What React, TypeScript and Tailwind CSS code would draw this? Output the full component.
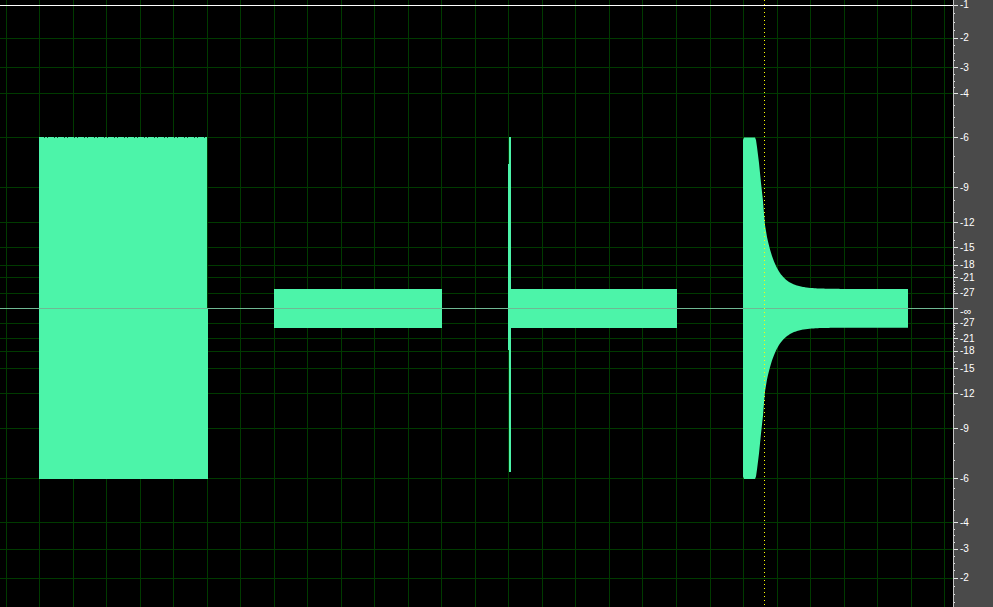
import React from 'react';

// amplitude display: linear amplitude, labelled in dB
const CX = 308.3;
const H = 340;
const W = 953;
const HT = 607;

const WAVE = '#4cf4a9';
const GRID = '#003a00';

const amp = (db: number) => Math.pow(10, db / 20);
const yUp = (db: number) => CX - H * amp(db);
const yDn = (db: number) => CX + H * amp(db);

const LABELS = [-1, -2, -3, -4, -6, -9, -12, -15, -18, -21, -27];

const minorTicks: number[] = [];
for (let d = -1.25; d > -4; d -= 0.25) minorTicks.push(d);
for (let d = -4.5; d > -6; d -= 0.5) minorTicks.push(d);
for (let d = -7; d > -28; d -= 1) if (!LABELS.includes(d)) minorTicks.push(d);

const px = (v: number) => Math.floor(v) + 0.5;

// decaying burst: measured edge, then exponential tail to the sustain level
function decayEnvelope() {
  const sustain = 0.057;
  const pts: [number, number][] = [
    [743, 140],
    [744, 137.5],
    [755, 137.5],
    [756, 140],
    [757, 147],
    [758, 155],
    [759, 163],
    [760, 173],
    [761, 183],
    [762, 192],
    [763, 201],
    [764, 214],
    [765, 225],
    [766, 231],
    [767, 237],
  ];
  const a0 = (CX - 237) / H;
  for (let x = 768; x <= 908; x++) {
    const a = sustain + (a0 - sustain) * Math.exp(-(x - 767) / 11);
    pts.push([x, CX - H * a]);
  }
  const top = pts.map(([x, y]) => `${x},${y.toFixed(1)}`);
  const bottom = [...pts].reverse().map(([x, y]) => `${x},${(2 * CX - y).toFixed(1)}`);
  return `M${top.join(' L')} L${bottom.join(' L')} Z`;
}

function Waveform() {
  const vLines = Array.from({ length: 29 }, (_, k) => 6.3 + 33.51 * k);
  const hLines: number[] = [];
  LABELS.forEach((db) => {
    if (db !== -1) hLines.push(yUp(db));
    const b = yDn(db);
    if (b < HT) hLines.push(b);
  });
  const sustTop = 289;
  const sustBot = 327.7;

  return (
    <svg width={W} height={HT} className="block" shapeRendering="crispEdges">
      <rect width={W} height={HT} fill="#000" />
      {vLines.map((x) => (
        <line key={`v${x}`} x1={px(x)} x2={px(x)} y1={0} y2={HT} stroke={GRID} strokeWidth={1} />
      ))}
      {hLines.map((y) => (
        <line key={`h${y}`} x1={0} x2={W} y1={px(y)} y2={px(y)} stroke={GRID} strokeWidth={1} />
      ))}
      <line x1={0} x2={W} y1={5.5} y2={5.5} stroke="#ffffff" strokeWidth={1} />

      {/* steady tone, -6 dB */}
      <rect x={39} y={137} width={168} height={342} fill={WAVE} />
      <rect x={207} y={308} width={1} height={171} fill={WAVE} />
      <line x1={44} x2={206} y1={137.5} y2={137.5} stroke="#000" strokeOpacity={0.7} strokeDasharray="1 2 1 6" />

      {/* quiet tone */}
      <rect x={274} y={sustTop} width={168} height={sustBot - sustTop} fill={WAVE} />

      {/* click then quiet tone */}
      <rect x={509} y={137} width={1.5} height={335} fill={WAVE} />
      <rect x={508} y={164} width={3} height={186} fill={WAVE} />
      <rect x={511} y={sustTop} width={166} height={sustBot - sustTop} fill={WAVE} />

      {/* decaying burst */}
      <path d={decayEnvelope()} fill={WAVE} shapeRendering="auto" />

      <line x1={0} x2={W} y1={308.5} y2={308.5} stroke="#6fb893" strokeWidth={1} />

      <line
        x1={764.5}
        x2={764.5}
        y1={0}
        y2={HT}
        stroke="#ffff00"
        strokeWidth={1}
        strokeDasharray="1 3"
      />
    </svg>
  );
}

function Scale() {
  const marks: { y: number; text: string }[] = [];
  LABELS.forEach((db) => {
    marks.push({ y: yUp(db), text: String(db) });
    const b = yDn(db);
    if (b < HT) marks.push({ y: b, text: String(db) });
  });
  const minors: number[] = [];
  minorTicks.forEach((db) => {
    minors.push(yUp(db));
    const b = yDn(db);
    if (b < HT) minors.push(b);
  });

  return (
    <div className="relative h-[607px] w-[40px] border-l border-[#c4c4c4] bg-[#4a4a4a]">
      <svg width={39} height={HT} className="absolute left-0 top-0" shapeRendering="crispEdges">
        {marks.map((m) => (
          <line key={`M${m.y}`} x1={0} x2={4} y1={px(m.y)} y2={px(m.y)} stroke="#e6e6e6" />
        ))}
        {minors.map((y) => (
          <rect key={`m${y}`} x={0} y={Math.floor(y)} width={1} height={1} fill="#e6e6e6" />
        ))}
        <line x1={0} x2={4} y1={308.5} y2={308.5} stroke="#e6e6e6" />
      </svg>
      {marks.map((m) => (
        <span
          key={`t${m.y}`}
          className="absolute left-[6px] text-[10px] leading-[12px] text-white"
          style={{ top: m.y - 6 }}
        >
          {m.text}
        </span>
      ))}
      <span
        className="absolute left-[6px] text-[11px] leading-[12px] text-white"
        style={{ top: CX - 3 }}
      >
        -∞
      </span>
    </div>
  );
}

export default function App() {
  return (
    <div
      className="flex h-[607px] w-[993px] overflow-hidden bg-black"
      style={{ fontFamily: '"Liberation Sans", Arial, sans-serif' }}
    >
      <Waveform />
      <Scale />
    </div>
  );
}
